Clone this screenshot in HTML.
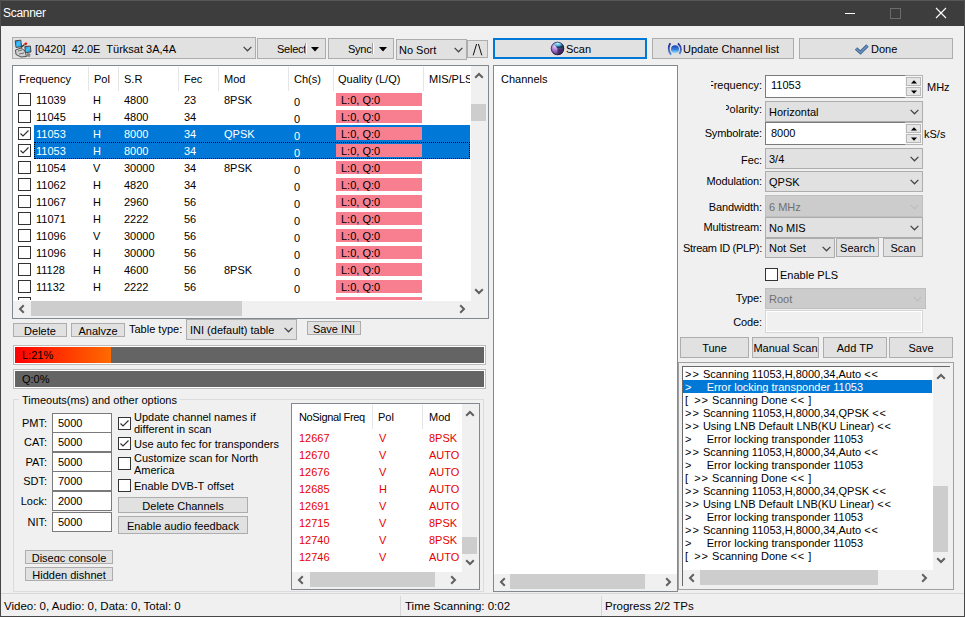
<!DOCTYPE html><html><head><meta charset="utf-8"><style>
html,body{margin:0;padding:0;}
body{width:965px;height:617px;position:relative;overflow:hidden;background:#f0f0f0;font-family:"Liberation Sans",sans-serif;font-size:11px;color:#000;}
body div, body svg{position:absolute;}
.t{white-space:pre;}
.btn{background:#e1e1e1;border:1px solid #adadad;text-align:center;white-space:pre;overflow:hidden;}
</style></head><body>
<div style="left:0px;top:0px;width:965px;height:26px;background:#3d3d3d"></div>
<div style="left:0px;top:0px;width:965px;height:1px;background:#575757"></div>
<div style="left:0px;top:0px;width:1px;height:26px;background:#4d4d4d"></div>
<div style="left:964px;top:0px;width:1px;height:26px;background:#4d4d4d"></div>
<div class="t" style="left:3px;top:6px;line-height:15px;color:#fff;font-size:12px;letter-spacing:-0.3px">Scanner</div>
<div style="left:845px;top:13px;width:10px;height:1px;background:#fff"></div>
<div style="left:890px;top:8px;width:9px;height:9px;border:1px solid #6b6b6b"></div>
<svg style="left:935px;top:7px" width="12" height="12" viewBox="0 0 12 12"><path d="M1 1 L11 11 M11 1 L1 11" stroke="#fff" stroke-width="1.1"/></svg>
<div style="left:0px;top:26px;width:1px;height:591px;background:#474747"></div>
<div style="left:964px;top:26px;width:1px;height:591px;background:#474747"></div>
<div style="left:0px;top:616px;width:965px;height:1px;background:#474747"></div>
<div style="left:12px;top:37px;width:242px;height:20px;background:#e1e1e1;border:1px solid #adadad"></div>
<div class="t" style="left:35px;top:38px;line-height:22px;color:#000">[0420]  42.0E  Türksat 3A,4A</div>
<svg style="left:243px;top:46px" width="9" height="6" viewBox="0 0 9 6"><path d="M0.6 0.9 L4.5 4.8 L8.4 0.9" fill="none" stroke="#444" stroke-width="1.25"/></svg>
<svg style="left:14px;top:39px" width="18" height="19" viewBox="0 0 18 19">
<defs><linearGradient id="sp" x1="0" y1="0" x2="1" y2="1"><stop offset="0" stop-color="#1a7fd8"/><stop offset="0.5" stop-color="#3cc6ff"/><stop offset="1" stop-color="#1c8de0"/></linearGradient></defs>
<path d="M1.5 11 L7 9 L11 12 L12.5 17.5 L7 18 L2 15.5 Z" fill="#d0d0d0" stroke="#505050" stroke-width="1"/>
<path d="M4 12 L8 11 M5 15 L10 14" stroke="#707070" stroke-width="1"/>
<path d="M13 13 L16.5 15 L16 18 L13 17.5 Z" fill="#8a8a8a"/>
<path d="M7 8.5 L10.5 5.5" stroke="#333" stroke-width="1.4"/>
<path d="M1.2 1.8 L6.8 1.2 L7.6 7.8 L2 8.4 Z" fill="url(#sp)" stroke="#4a3a30" stroke-width="0.9"/>
<path d="M10.8 7.6 L16.4 7 L17 13 L11.4 13.6 Z" fill="url(#sp)" stroke="#4a3a30" stroke-width="0.9"/>
<path d="M10 4.8 Q11.5 2.8 13.5 4 L12 6.8 Z" fill="#e01818"/>
</svg>
<div class="btn" style="left:257px;top:38px;width:67px;height:19px;line-height:19px;"><span style="position:relative;top:1px"></span></div>
<div class="t" style="left:277px;top:43px;line-height:13px;letter-spacing:-0.25px">Select</div>
<div style="left:305px;top:43px;width:1px;height:11px;background:#9a9a9a"></div>
<div style="left:306px;top:43px;width:1px;height:11px;background:#fff"></div>
<svg style="left:311px;top:47px" width="8" height="5" viewBox="0 0 8 5"><path d="M0 0 L8 0 L4 4.6 Z" fill="#000"/></svg>
<div class="btn" style="left:328px;top:38px;width:64px;height:19px;line-height:19px;"><span style="position:relative;top:1px"></span></div>
<div class="t" style="left:348px;top:43px;line-height:13px;letter-spacing:-0.25px">Sync</div>
<div style="left:372px;top:43px;width:1px;height:11px;background:#9a9a9a"></div>
<div style="left:373px;top:43px;width:1px;height:11px;background:#fff"></div>
<svg style="left:379px;top:47px" width="8" height="5" viewBox="0 0 8 5"><path d="M0 0 L8 0 L4 4.6 Z" fill="#000"/></svg>
<div style="left:396px;top:39px;width:69px;height:19px;background:#e1e1e1;border:1px solid #adadad"></div>
<div class="t" style="left:399px;top:40px;line-height:21px;color:#000">No Sort</div>
<svg style="left:454px;top:47px" width="9" height="6" viewBox="0 0 9 6"><path d="M0.6 0.9 L4.5 4.8 L8.4 0.9" fill="none" stroke="#444" stroke-width="1.25"/></svg>
<div class="btn" style="left:467px;top:40px;width:19px;height:16px;line-height:16px;"><span style="position:relative;top:1px"></span></div>
<svg style="left:472px;top:43px" width="11" height="13" viewBox="0 0 11 13"><path d="M1.2 12.3 L4.6 1 M6.4 1 L9.8 12.3" fill="none" stroke="#111" stroke-width="1"/></svg>
<div style="left:493px;top:38px;width:150px;height:17px;background:#e1e1e1;border:2px solid #0078d7"></div>
<svg style="left:550px;top:41px" width="15" height="15" viewBox="0 0 15 15">
<defs><radialGradient id="sph" cx="0.35" cy="0.3" r="0.8"><stop offset="0" stop-color="#f0d8ff"/><stop offset="0.5" stop-color="#9a66c0"/><stop offset="1" stop-color="#2a2050"/></radialGradient>
<radialGradient id="sph2" cx="0.4" cy="0.2" r="0.6"><stop offset="0" stop-color="#c8f4ff"/><stop offset="0.6" stop-color="#58b0e0"/><stop offset="1" stop-color="#1a3a60"/></radialGradient></defs>
<circle cx="7.5" cy="7.5" r="6.6" fill="url(#sph)"/>
<path d="M7.5 7.5 L3.2 2.5 A6.6 6.6 0 0 1 14.1 7.5 Z" fill="url(#sph2)"/>
<path d="M7.5 7.5 L14.1 7.5 A6.6 6.6 0 0 1 7.5 14.1 Z" fill="#3a2258" opacity="0.8"/>
<circle cx="7.5" cy="7.5" r="6.3" fill="none" stroke="#1c1838" stroke-width="0.9" opacity="0.75"/>
</svg>
<div class="t" style="left:566px;top:43px;line-height:13px;">Scan</div>
<div class="btn" style="left:652px;top:38px;width:140px;height:19px;line-height:19px;"><span style="position:relative;top:1px"></span></div>
<svg style="left:666px;top:42px" width="18" height="15" viewBox="0 0 18 15">
<defs><linearGradient id="ucl" x1="0" y1="0" x2="0" y2="1"><stop offset="0" stop-color="#1a3fb0"/><stop offset="0.55" stop-color="#3a82e0"/><stop offset="1" stop-color="#9ee4ff"/></linearGradient>
<linearGradient id="ucb" x1="0" y1="0" x2="0" y2="1"><stop offset="0" stop-color="#1a2a90"/><stop offset="1" stop-color="#5a8ad8"/></linearGradient></defs>
<circle cx="9" cy="7.2" r="4" fill="url(#ucl)"/>
<path d="M4.3 1.3 Q0.8 7 5 12.8" fill="none" stroke="url(#ucb)" stroke-width="1.8"/>
<path d="M12 1.3 Q17 6 13.5 12" fill="none" stroke="url(#ucb)" stroke-width="1.8"/>
</svg>
<div class="t" style="left:683px;top:43px;line-height:13px;">Update Channel list</div>
<div class="btn" style="left:799px;top:38px;width:152px;height:19px;line-height:19px;"><span style="position:relative;top:1px"></span></div>
<svg style="left:854px;top:43px" width="15" height="12" viewBox="0 0 15 12"><path d="M2 5.5 L6.5 9.5 L13.5 2.5" fill="none" stroke="#3f6390" stroke-width="3.4" stroke-linejoin="miter"/><path d="M2 5.5 L6.5 9.5 L13.5 2.5" fill="none" stroke="#6a92c0" stroke-width="1.6"/></svg>
<div class="t" style="left:871px;top:43px;line-height:13px;">Done</div>
<div style="left:12px;top:65px;width:477px;height:254px;background:#fff;border:1px solid #828790;box-sizing:border-box"></div>
<div class="t" style="left:19px;top:73px;line-height:13px;">Frequency</div>
<div class="t" style="left:94px;top:73px;line-height:13px;">Pol</div>
<div class="t" style="left:124px;top:73px;line-height:13px;">S.R</div>
<div class="t" style="left:184px;top:73px;line-height:13px;">Fec</div>
<div class="t" style="left:224px;top:73px;line-height:13px;">Mod</div>
<div class="t" style="left:294px;top:73px;line-height:13px;">Ch(s)</div>
<div class="t" style="left:338px;top:73px;line-height:13px;">Quality (L/Q)</div>
<div style="left:88px;top:67px;width:1px;height:24px;background:#e5e5e5"></div>
<div style="left:118px;top:67px;width:1px;height:24px;background:#e5e5e5"></div>
<div style="left:178px;top:67px;width:1px;height:24px;background:#e5e5e5"></div>
<div style="left:218px;top:67px;width:1px;height:24px;background:#e5e5e5"></div>
<div style="left:288px;top:67px;width:1px;height:24px;background:#e5e5e5"></div>
<div style="left:333px;top:67px;width:1px;height:24px;background:#e5e5e5"></div>
<div style="left:423px;top:67px;width:1px;height:24px;background:#e5e5e5"></div>
<div style="left:13px;top:66px;width:458px;height:234px;overflow:hidden">
<div style="left:5px;top:27px;width:11px;height:11px;background:#fff;border:1px solid #333"></div>
<div class="t" style="left:23px;top:28px;line-height:13px;color:#000">11039</div>
<div class="t" style="left:80px;top:28px;line-height:13px;color:#000">H</div>
<div class="t" style="left:111px;top:28px;line-height:13px;color:#000">4800</div>
<div class="t" style="left:171px;top:28px;line-height:13px;color:#000">23</div>
<div class="t" style="left:211px;top:28px;line-height:13px;color:#000">8PSK</div>
<div class="t" style="left:281px;top:30px;line-height:13px;color:#000">0</div>
<div style="left:323px;top:27px;width:86px;height:13px;background:#f77f90"></div>
<div class="t" style="left:328px;top:28px;line-height:13px;color:#000">L:0, Q:0</div>
<div style="left:5px;top:44px;width:11px;height:11px;background:#fff;border:1px solid #333"></div>
<div class="t" style="left:23px;top:45px;line-height:13px;color:#000">11045</div>
<div class="t" style="left:80px;top:45px;line-height:13px;color:#000">H</div>
<div class="t" style="left:111px;top:45px;line-height:13px;color:#000">4800</div>
<div class="t" style="left:171px;top:45px;line-height:13px;color:#000">34</div>
<div class="t" style="left:281px;top:47px;line-height:13px;color:#000">0</div>
<div style="left:323px;top:44px;width:86px;height:13px;background:#f77f90"></div>
<div class="t" style="left:328px;top:45px;line-height:13px;color:#000">L:0, Q:0</div>
<div style="left:21px;top:59px;width:436px;height:17px;background:#0078d7"></div>
<div style="left:5px;top:61px;width:11px;height:11px;background:#fff;border:1px solid #333"></div>
<svg style="left:6px;top:62px" width="11" height="11" viewBox="0 0 11 11"><path d="M1.5 5.5 L4 8 L9.5 2.5" fill="none" stroke="#333" stroke-width="1.2"/></svg>
<div class="t" style="left:23px;top:62px;line-height:13px;color:#fff">11053</div>
<div class="t" style="left:80px;top:62px;line-height:13px;color:#fff">H</div>
<div class="t" style="left:111px;top:62px;line-height:13px;color:#fff">8000</div>
<div class="t" style="left:171px;top:62px;line-height:13px;color:#fff">34</div>
<div class="t" style="left:211px;top:62px;line-height:13px;color:#fff">QPSK</div>
<div class="t" style="left:281px;top:64px;line-height:13px;color:#fff">0</div>
<div style="left:323px;top:61px;width:86px;height:13px;background:#f77f90"></div>
<div class="t" style="left:328px;top:62px;line-height:13px;color:#000">L:0, Q:0</div>
<div style="left:21px;top:76px;width:436px;height:17px;background:#0078d7"></div>
<div style="left:21px;top:76px;width:434px;height:15px;border:1px dotted #000"></div>
<div style="left:5px;top:78px;width:11px;height:11px;background:#fff;border:1px solid #333"></div>
<svg style="left:6px;top:79px" width="11" height="11" viewBox="0 0 11 11"><path d="M1.5 5.5 L4 8 L9.5 2.5" fill="none" stroke="#333" stroke-width="1.2"/></svg>
<div class="t" style="left:23px;top:79px;line-height:13px;color:#fff">11053</div>
<div class="t" style="left:80px;top:79px;line-height:13px;color:#fff">H</div>
<div class="t" style="left:111px;top:79px;line-height:13px;color:#fff">8000</div>
<div class="t" style="left:171px;top:79px;line-height:13px;color:#fff">34</div>
<div class="t" style="left:281px;top:81px;line-height:13px;color:#fff">0</div>
<div style="left:323px;top:78px;width:86px;height:13px;background:#f77f90"></div>
<div class="t" style="left:328px;top:79px;line-height:13px;color:#000">L:0, Q:0</div>
<div style="left:5px;top:95px;width:11px;height:11px;background:#fff;border:1px solid #333"></div>
<div class="t" style="left:23px;top:96px;line-height:13px;color:#000">11054</div>
<div class="t" style="left:80px;top:96px;line-height:13px;color:#000">V</div>
<div class="t" style="left:111px;top:96px;line-height:13px;color:#000">30000</div>
<div class="t" style="left:171px;top:96px;line-height:13px;color:#000">34</div>
<div class="t" style="left:211px;top:96px;line-height:13px;color:#000">8PSK</div>
<div class="t" style="left:281px;top:98px;line-height:13px;color:#000">0</div>
<div style="left:323px;top:95px;width:86px;height:13px;background:#f77f90"></div>
<div class="t" style="left:328px;top:96px;line-height:13px;color:#000">L:0, Q:0</div>
<div style="left:5px;top:112px;width:11px;height:11px;background:#fff;border:1px solid #333"></div>
<div class="t" style="left:23px;top:113px;line-height:13px;color:#000">11062</div>
<div class="t" style="left:80px;top:113px;line-height:13px;color:#000">H</div>
<div class="t" style="left:111px;top:113px;line-height:13px;color:#000">4820</div>
<div class="t" style="left:171px;top:113px;line-height:13px;color:#000">34</div>
<div class="t" style="left:281px;top:115px;line-height:13px;color:#000">0</div>
<div style="left:323px;top:112px;width:86px;height:13px;background:#f77f90"></div>
<div class="t" style="left:328px;top:113px;line-height:13px;color:#000">L:0, Q:0</div>
<div style="left:5px;top:129px;width:11px;height:11px;background:#fff;border:1px solid #333"></div>
<div class="t" style="left:23px;top:130px;line-height:13px;color:#000">11067</div>
<div class="t" style="left:80px;top:130px;line-height:13px;color:#000">H</div>
<div class="t" style="left:111px;top:130px;line-height:13px;color:#000">2960</div>
<div class="t" style="left:171px;top:130px;line-height:13px;color:#000">56</div>
<div class="t" style="left:281px;top:132px;line-height:13px;color:#000">0</div>
<div style="left:323px;top:129px;width:86px;height:13px;background:#f77f90"></div>
<div class="t" style="left:328px;top:130px;line-height:13px;color:#000">L:0, Q:0</div>
<div style="left:5px;top:146px;width:11px;height:11px;background:#fff;border:1px solid #333"></div>
<div class="t" style="left:23px;top:147px;line-height:13px;color:#000">11071</div>
<div class="t" style="left:80px;top:147px;line-height:13px;color:#000">H</div>
<div class="t" style="left:111px;top:147px;line-height:13px;color:#000">2222</div>
<div class="t" style="left:171px;top:147px;line-height:13px;color:#000">56</div>
<div class="t" style="left:281px;top:149px;line-height:13px;color:#000">0</div>
<div style="left:323px;top:146px;width:86px;height:13px;background:#f77f90"></div>
<div class="t" style="left:328px;top:147px;line-height:13px;color:#000">L:0, Q:0</div>
<div style="left:5px;top:163px;width:11px;height:11px;background:#fff;border:1px solid #333"></div>
<div class="t" style="left:23px;top:164px;line-height:13px;color:#000">11096</div>
<div class="t" style="left:80px;top:164px;line-height:13px;color:#000">V</div>
<div class="t" style="left:111px;top:164px;line-height:13px;color:#000">30000</div>
<div class="t" style="left:171px;top:164px;line-height:13px;color:#000">56</div>
<div class="t" style="left:281px;top:166px;line-height:13px;color:#000">0</div>
<div style="left:323px;top:163px;width:86px;height:13px;background:#f77f90"></div>
<div class="t" style="left:328px;top:164px;line-height:13px;color:#000">L:0, Q:0</div>
<div style="left:5px;top:180px;width:11px;height:11px;background:#fff;border:1px solid #333"></div>
<div class="t" style="left:23px;top:181px;line-height:13px;color:#000">11096</div>
<div class="t" style="left:80px;top:181px;line-height:13px;color:#000">H</div>
<div class="t" style="left:111px;top:181px;line-height:13px;color:#000">30000</div>
<div class="t" style="left:171px;top:181px;line-height:13px;color:#000">56</div>
<div class="t" style="left:281px;top:183px;line-height:13px;color:#000">0</div>
<div style="left:323px;top:180px;width:86px;height:13px;background:#f77f90"></div>
<div class="t" style="left:328px;top:181px;line-height:13px;color:#000">L:0, Q:0</div>
<div style="left:5px;top:197px;width:11px;height:11px;background:#fff;border:1px solid #333"></div>
<div class="t" style="left:23px;top:198px;line-height:13px;color:#000">11128</div>
<div class="t" style="left:80px;top:198px;line-height:13px;color:#000">H</div>
<div class="t" style="left:111px;top:198px;line-height:13px;color:#000">4600</div>
<div class="t" style="left:171px;top:198px;line-height:13px;color:#000">56</div>
<div class="t" style="left:211px;top:198px;line-height:13px;color:#000">8PSK</div>
<div class="t" style="left:281px;top:200px;line-height:13px;color:#000">0</div>
<div style="left:323px;top:197px;width:86px;height:13px;background:#f77f90"></div>
<div class="t" style="left:328px;top:198px;line-height:13px;color:#000">L:0, Q:0</div>
<div style="left:5px;top:214px;width:11px;height:11px;background:#fff;border:1px solid #333"></div>
<div class="t" style="left:23px;top:215px;line-height:13px;color:#000">11132</div>
<div class="t" style="left:80px;top:215px;line-height:13px;color:#000">H</div>
<div class="t" style="left:111px;top:215px;line-height:13px;color:#000">2222</div>
<div class="t" style="left:171px;top:215px;line-height:13px;color:#000">56</div>
<div class="t" style="left:281px;top:217px;line-height:13px;color:#000">0</div>
<div style="left:323px;top:214px;width:86px;height:13px;background:#f77f90"></div>
<div class="t" style="left:328px;top:215px;line-height:13px;color:#000">L:0, Q:0</div>
<div style="left:5px;top:231px;width:11px;height:11px;background:#fff;border:1px solid #333"></div>
<div style="left:323px;top:231px;width:86px;height:13px;background:#f77f90"></div>
</div>
<div style="left:471px;top:66px;width:17px;height:24px;background:#fff"></div>
<div style="left:471px;top:66px;width:17px;height:235px;background:#f0f0f0"></div>
<div style="left:471px;top:104px;width:15px;height:17px;background:#cdcdcd"></div>
<svg style="left:474px;top:72px" width="10" height="7" viewBox="0 0 10 7"><path d="M1.2 5.8 L5 2 L8.8 5.8" fill="none" stroke="#606060" stroke-width="2"/></svg>
<svg style="left:474px;top:288px" width="10" height="7" viewBox="0 0 10 7"><path d="M1.2 1.2 L5 5 L8.8 1.2" fill="none" stroke="#606060" stroke-width="2"/></svg>
<div style="left:13px;top:301px;width:458px;height:17px;background:#f0f0f0"></div>
<div style="left:31px;top:301px;width:211px;height:15px;background:#cdcdcd"></div>
<svg style="left:18px;top:304px" width="7" height="10" viewBox="0 0 7 10"><path d="M5.8 1.2 L2 5 L5.8 8.8" fill="none" stroke="#606060" stroke-width="2"/></svg>
<svg style="left:459px;top:304px" width="7" height="10" viewBox="0 0 7 10"><path d="M1.2 1.2 L5 5 L1.2 8.8" fill="none" stroke="#606060" stroke-width="2"/></svg>
<div style="left:471px;top:301px;width:17px;height:17px;background:#f0f0f0"></div>
<div style="left:429px;top:73px;width:41px;height:13px;overflow:hidden"><div class="t" style="left:0;top:0;line-height:13px">MIS/PLS,</div></div>
<div class="btn" style="left:13px;top:323px;width:52px;height:12px;line-height:12px;"><span style="position:relative;top:1px">Delete</span></div>
<div class="btn" style="left:71px;top:323px;width:52px;height:12px;"><div style="left:0;top:0;width:52px;height:11px;overflow:hidden"><div class="t" style="left:0;top:1px;width:52px;text-align:center;line-height:12px">Analyze</div></div></div>
<div class="t" style="left:129px;top:323px;line-height:13px;">Table type:</div>
<div style="left:186px;top:319px;width:109px;height:19px;background:#e1e1e1;border:1px solid #adadad"></div>
<div class="t" style="left:190px;top:320px;line-height:21px;color:#000">INI (default) table</div>
<svg style="left:284px;top:327px" width="9" height="6" viewBox="0 0 9 6"><path d="M0.6 0.9 L4.5 4.8 L8.4 0.9" fill="none" stroke="#444" stroke-width="1.25"/></svg>
<div class="btn" style="left:307px;top:321px;width:52px;height:12px;line-height:12px;"><span style="position:relative;top:1px">Save INI</span></div>
<div style="left:13px;top:345px;width:473px;height:20px;background:#fff;border:1px solid #bcbcbc;box-sizing:border-box"></div>
<div style="left:15px;top:347px;width:469px;height:16px;background:#646464"></div>
<div style="left:15px;top:347px;width:96px;height:16px;background:linear-gradient(to right,#ff0000,#ff6a00)"></div>
<div class="t" style="left:22px;top:349px;line-height:13px;color:#000">L:21%</div>
<div style="left:13px;top:369px;width:473px;height:20px;background:#fff;border:1px solid #bcbcbc;box-sizing:border-box"></div>
<div style="left:15px;top:371px;width:469px;height:16px;background:#646464"></div>
<div class="t" style="left:22px;top:373px;line-height:13px;color:#000">Q:0%</div>
<div style="left:13px;top:399px;width:471px;height:193px;border:1px solid #dcdcdc;box-sizing:border-box"></div>
<div style="left:19px;top:392px;width:161px;height:14px;background:#f0f0f0"></div>
<div class="t" style="left:22px;top:393px;line-height:14px;">Timeouts(ms) and other options</div>
<div class="t" style="left:0;top:413px;width:47px;text-align:right;line-height:20px">PMT:</div>
<div style="left:52px;top:413px;width:58px;height:18px;background:#fff;border:1px solid #7a7a7a;"></div>
<div class="t" style="left:58px;top:413px;line-height:20px;">5000</div>
<div class="t" style="left:0;top:432px;width:47px;text-align:right;line-height:20px">CAT:</div>
<div style="left:52px;top:432px;width:58px;height:18px;background:#fff;border:1px solid #7a7a7a;"></div>
<div class="t" style="left:58px;top:432px;line-height:20px;">5000</div>
<div class="t" style="left:0;top:452px;width:47px;text-align:right;line-height:20px">PAT:</div>
<div style="left:52px;top:452px;width:58px;height:18px;background:#fff;border:1px solid #7a7a7a;"></div>
<div class="t" style="left:58px;top:452px;line-height:20px;">5000</div>
<div class="t" style="left:0;top:471px;width:47px;text-align:right;line-height:20px">SDT:</div>
<div style="left:52px;top:471px;width:58px;height:18px;background:#fff;border:1px solid #7a7a7a;"></div>
<div class="t" style="left:58px;top:471px;line-height:20px;">7000</div>
<div class="t" style="left:0;top:491px;width:47px;text-align:right;line-height:20px">Lock:</div>
<div style="left:52px;top:491px;width:58px;height:18px;background:#fff;border:1px solid #7a7a7a;"></div>
<div class="t" style="left:58px;top:491px;line-height:20px;">2000</div>
<div class="t" style="left:0;top:512px;width:47px;text-align:right;line-height:20px">NIT:</div>
<div style="left:52px;top:512px;width:58px;height:18px;background:#fff;border:1px solid #7a7a7a;"></div>
<div class="t" style="left:58px;top:512px;line-height:20px;">5000</div>
<div style="left:118px;top:417px;width:11px;height:11px;background:#fff;border:1px solid #333"></div>
<svg style="left:119px;top:418px" width="11" height="11" viewBox="0 0 11 11"><path d="M1.5 5.5 L4 8 L9.5 2.5" fill="none" stroke="#333" stroke-width="1.2"/></svg>
<div class="t" style="left:134px;top:411px;line-height:12px;">Update channel names if
different in scan</div>
<div style="left:118px;top:437px;width:11px;height:11px;background:#fff;border:1px solid #333"></div>
<svg style="left:119px;top:438px" width="11" height="11" viewBox="0 0 11 11"><path d="M1.5 5.5 L4 8 L9.5 2.5" fill="none" stroke="#333" stroke-width="1.2"/></svg>
<div class="t" style="left:134px;top:438px;line-height:12px;">Use auto fec for transponders</div>
<div style="left:118px;top:457px;width:11px;height:11px;background:#fff;border:1px solid #333"></div>
<div class="t" style="left:134px;top:452px;line-height:12px;">Customize scan for North
America</div>
<div style="left:118px;top:479px;width:11px;height:11px;background:#fff;border:1px solid #333"></div>
<div class="t" style="left:134px;top:480px;line-height:12px;">Enable DVB-T offset</div>
<div class="btn" style="left:118px;top:497px;width:128px;height:14px;line-height:14px;"><span style="position:relative;top:1px">Delete Channels</span></div>
<div class="btn" style="left:118px;top:516px;width:128px;height:16px;line-height:16px;"><span style="position:relative;top:1px">Enable audio feedback</span></div>
<div class="btn" style="left:25px;top:550px;width:86px;height:12px;"><div style="left:0;top:0;width:86px;height:11px;overflow:hidden"><div class="t" style="left:0;top:1px;width:86px;text-align:center;line-height:12px">Diseqc console</div></div></div>
<div class="btn" style="left:25px;top:567px;width:86px;height:12px;line-height:12px;"><span style="position:relative;top:1px">Hidden dishnet</span></div>
<div style="left:291px;top:403px;width:189px;height:187px;background:#fff;border:1px solid #828790;box-sizing:border-box"></div>
<div class="t" style="left:299px;top:411px;line-height:13px;letter-spacing:-0.35px">NoSignal Freq</div>
<div class="t" style="left:378px;top:411px;line-height:13px;">Pol</div>
<div class="t" style="left:429px;top:411px;line-height:13px;">Mod</div>
<div style="left:372px;top:405px;width:1px;height:24px;background:#e5e5e5"></div>
<div style="left:422px;top:405px;width:1px;height:24px;background:#e5e5e5"></div>
<div class="t" style="left:299px;top:432px;line-height:13px;color:#e60000">12667</div>
<div class="t" style="left:379px;top:432px;line-height:13px;color:#e60000">V</div>
<div class="t" style="left:429px;top:432px;line-height:13px;color:#e60000">8PSK</div>
<div class="t" style="left:299px;top:449px;line-height:13px;color:#e60000">12670</div>
<div class="t" style="left:379px;top:449px;line-height:13px;color:#e60000">V</div>
<div class="t" style="left:429px;top:449px;line-height:13px;color:#e60000">AUTO</div>
<div class="t" style="left:299px;top:466px;line-height:13px;color:#e60000">12676</div>
<div class="t" style="left:379px;top:466px;line-height:13px;color:#e60000">V</div>
<div class="t" style="left:429px;top:466px;line-height:13px;color:#e60000">AUTO</div>
<div class="t" style="left:299px;top:483px;line-height:13px;color:#e60000">12685</div>
<div class="t" style="left:379px;top:483px;line-height:13px;color:#e60000">H</div>
<div class="t" style="left:429px;top:483px;line-height:13px;color:#e60000">AUTO</div>
<div class="t" style="left:299px;top:500px;line-height:13px;color:#e60000">12691</div>
<div class="t" style="left:379px;top:500px;line-height:13px;color:#e60000">V</div>
<div class="t" style="left:429px;top:500px;line-height:13px;color:#e60000">AUTO</div>
<div class="t" style="left:299px;top:517px;line-height:13px;color:#e60000">12715</div>
<div class="t" style="left:379px;top:517px;line-height:13px;color:#e60000">V</div>
<div class="t" style="left:429px;top:517px;line-height:13px;color:#e60000">8PSK</div>
<div class="t" style="left:299px;top:534px;line-height:13px;color:#e60000">12740</div>
<div class="t" style="left:379px;top:534px;line-height:13px;color:#e60000">V</div>
<div class="t" style="left:429px;top:534px;line-height:13px;color:#e60000">8PSK</div>
<div class="t" style="left:299px;top:551px;line-height:13px;color:#e60000">12746</div>
<div class="t" style="left:379px;top:551px;line-height:13px;color:#e60000">V</div>
<div class="t" style="left:429px;top:551px;line-height:13px;color:#e60000">AUTO</div>
<div style="left:462px;top:404px;width:17px;height:168px;background:#f0f0f0"></div>
<div style="left:462px;top:537px;width:15px;height:17px;background:#cdcdcd"></div>
<svg style="left:465px;top:410px" width="10" height="7" viewBox="0 0 10 7"><path d="M1.2 5.8 L5 2 L8.8 5.8" fill="none" stroke="#606060" stroke-width="2"/></svg>
<svg style="left:465px;top:559px" width="10" height="7" viewBox="0 0 10 7"><path d="M1.2 1.2 L5 5 L8.8 1.2" fill="none" stroke="#606060" stroke-width="2"/></svg>
<div style="left:292px;top:572px;width:170px;height:17px;background:#f0f0f0"></div>
<div style="left:310px;top:572px;width:125px;height:15px;background:#cdcdcd"></div>
<svg style="left:297px;top:575px" width="7" height="10" viewBox="0 0 7 10"><path d="M5.8 1.2 L2 5 L5.8 8.8" fill="none" stroke="#606060" stroke-width="2"/></svg>
<svg style="left:450px;top:575px" width="7" height="10" viewBox="0 0 7 10"><path d="M1.2 1.2 L5 5 L1.2 8.8" fill="none" stroke="#606060" stroke-width="2"/></svg>
<div style="left:462px;top:572px;width:17px;height:17px;background:#f0f0f0"></div>
<div style="left:493px;top:65px;width:185px;height:527px;background:#fff;border:1px solid #828790;box-sizing:border-box"></div>
<div class="t" style="left:501px;top:73px;line-height:13px;">Channels</div>
<div style="left:494px;top:574px;width:183px;height:17px;background:#f0f0f0"></div>
<div style="left:510px;top:574px;width:135px;height:15px;background:#cdcdcd"></div>
<svg style="left:499px;top:577px" width="7" height="10" viewBox="0 0 7 10"><path d="M5.8 1.2 L2 5 L5.8 8.8" fill="none" stroke="#606060" stroke-width="2"/></svg>
<svg style="left:665px;top:577px" width="7" height="10" viewBox="0 0 7 10"><path d="M1.2 1.2 L5 5 L1.2 8.8" fill="none" stroke="#606060" stroke-width="2"/></svg>
<div style="left:711px;top:74px;width:51px;height:22px;overflow:hidden"><div class="t" style="right:0;top:0;line-height:22px;text-align:right">Frequency:</div></div>
<div style="left:765px;top:75px;width:156px;height:21px;background:#fff;border:1px solid #7a7a7a;"></div>
<div class="t" style="left:771px;top:74px;line-height:23px;">11053</div>
<div style="left:726px;top:99px;width:36px;height:21px;overflow:hidden"><div class="t" style="right:0;top:0;line-height:21px;text-align:right">Polarity:</div></div>
<div style="left:765px;top:101px;width:156px;height:19px;background:#e1e1e1;border:1px solid #adadad"></div>
<div class="t" style="left:769px;top:102px;line-height:21px;color:#000">Horizontal</div>
<svg style="left:910px;top:109px" width="9" height="6" viewBox="0 0 9 6"><path d="M0.6 0.9 L4.5 4.8 L8.4 0.9" fill="none" stroke="#444" stroke-width="1.25"/></svg>
<div class="t" style="left:640px;top:122px;width:122px;text-align:right;line-height:22px;letter-spacing:-0.12px">Symbolrate:</div>
<div style="left:765px;top:122px;width:156px;height:21px;background:#fff;border:1px solid #7a7a7a;"></div>
<div class="t" style="left:771px;top:122px;line-height:23px;">8000</div>
<div style="left:905px;top:75px;width:18px;height:23px;background:#f7f7f7;border:1px solid #b4b4b4;border-left:none;box-sizing:border-box"></div>
<div style="left:906px;top:77px;width:15px;height:9px;background:#e6e6e6;border:1px solid #b8b8b8;box-sizing:border-box"></div>
<div style="left:906px;top:87px;width:15px;height:9px;background:#e6e6e6;border:1px solid #b8b8b8;box-sizing:border-box"></div>
<svg style="left:911px;top:80px" width="6" height="4" viewBox="0 0 6 4"><path d="M0 3.6 L3 0.2 L6 3.6 Z" fill="#000"/></svg>
<svg style="left:911px;top:90px" width="6" height="4" viewBox="0 0 6 4"><path d="M0 0.4 L3 3.8 L6 0.4 Z" fill="#000"/></svg>
<div style="left:905px;top:122px;width:18px;height:23px;background:#f7f7f7;border:1px solid #b4b4b4;border-left:none;box-sizing:border-box"></div>
<div style="left:906px;top:124px;width:15px;height:9px;background:#e6e6e6;border:1px solid #b8b8b8;box-sizing:border-box"></div>
<div style="left:906px;top:134px;width:15px;height:9px;background:#e6e6e6;border:1px solid #b8b8b8;box-sizing:border-box"></div>
<svg style="left:911px;top:127px" width="6" height="4" viewBox="0 0 6 4"><path d="M0 3.6 L3 0.2 L6 3.6 Z" fill="#000"/></svg>
<svg style="left:911px;top:137px" width="6" height="4" viewBox="0 0 6 4"><path d="M0 0.4 L3 3.8 L6 0.4 Z" fill="#000"/></svg>
<div class="t" style="left:927px;top:81px;line-height:13px;">MHz</div>
<div class="t" style="left:924px;top:128px;line-height:13px;">kS/s</div>
<div class="t" style="left:640px;top:150px;width:122px;text-align:right;line-height:21px;letter-spacing:-0.12px">Fec:</div>
<div style="left:765px;top:148px;width:156px;height:19px;background:#e1e1e1;border:1px solid #adadad"></div>
<div class="t" style="left:769px;top:149px;line-height:21px;color:#000">3/4</div>
<svg style="left:910px;top:156px" width="9" height="6" viewBox="0 0 9 6"><path d="M0.6 0.9 L4.5 4.8 L8.4 0.9" fill="none" stroke="#444" stroke-width="1.25"/></svg>
<div class="t" style="left:640px;top:171px;width:122px;text-align:right;line-height:21px;letter-spacing:-0.12px">Modulation:</div>
<div style="left:765px;top:171px;width:156px;height:19px;background:#e1e1e1;border:1px solid #adadad"></div>
<div class="t" style="left:769px;top:172px;line-height:21px;color:#000">QPSK</div>
<svg style="left:910px;top:179px" width="9" height="6" viewBox="0 0 9 6"><path d="M0.6 0.9 L4.5 4.8 L8.4 0.9" fill="none" stroke="#444" stroke-width="1.25"/></svg>
<div class="t" style="left:640px;top:196px;width:122px;text-align:right;line-height:22px;letter-spacing:-0.12px">Bandwidth:</div>
<div style="left:765px;top:195px;width:156px;height:20px;background:#cccccc;border:1px solid #bfbfbf"></div>
<div class="t" style="left:769px;top:196px;line-height:22px;color:#707070">6 MHz</div>
<svg style="left:910px;top:204px" width="9" height="6" viewBox="0 0 9 6"><path d="M0.6 0.9 L4.5 4.8 L8.4 0.9" fill="none" stroke="#bfbfbf" stroke-width="1.25"/></svg>
<div class="t" style="left:640px;top:217px;width:122px;text-align:right;line-height:21px;letter-spacing:-0.12px">Multistream:</div>
<div style="left:765px;top:217px;width:156px;height:19px;background:#e1e1e1;border:1px solid #adadad"></div>
<div class="t" style="left:769px;top:218px;line-height:21px;color:#000">No MIS</div>
<svg style="left:910px;top:225px" width="9" height="6" viewBox="0 0 9 6"><path d="M0.6 0.9 L4.5 4.8 L8.4 0.9" fill="none" stroke="#444" stroke-width="1.25"/></svg>
<div class="t" style="left:640px;top:238px;width:122px;text-align:right;line-height:20px;letter-spacing:-0.3px">Stream ID (PLP):</div>
<div style="left:765px;top:238px;width:68px;height:18px;background:#e1e1e1;border:1px solid #adadad"></div>
<div class="t" style="left:769px;top:238px;line-height:20px;color:#000">Not Set</div>
<svg style="left:822px;top:246px" width="9" height="6" viewBox="0 0 9 6"><path d="M0.6 0.9 L4.5 4.8 L8.4 0.9" fill="none" stroke="#444" stroke-width="1.25"/></svg>
<div class="btn" style="left:836px;top:238px;width:41px;height:17px;line-height:17px;"><span style="position:relative;top:1px">Search</span></div>
<div class="btn" style="left:883px;top:238px;width:38px;height:17px;line-height:17px;"><span style="position:relative;top:1px">Scan</span></div>
<div style="left:765px;top:268px;width:11px;height:11px;background:#fff;border:1px solid #333"></div>
<div class="t" style="left:780px;top:268px;line-height:14px;">Enable PLS</div>
<div class="t" style="left:640px;top:288px;width:122px;text-align:right;line-height:21px;letter-spacing:-0.12px">Type:</div>
<div style="left:765px;top:288px;width:159px;height:19px;background:#cccccc;border:1px solid #bfbfbf"></div>
<div class="t" style="left:769px;top:289px;line-height:21px;color:#707070">Root</div>
<svg style="left:913px;top:296px" width="9" height="6" viewBox="0 0 9 6"><path d="M0.6 0.9 L4.5 4.8 L8.4 0.9" fill="none" stroke="#bfbfbf" stroke-width="1.25"/></svg>
<div class="t" style="left:640px;top:311px;width:122px;text-align:right;line-height:23px;letter-spacing:-0.12px">Code:</div>
<div style="left:765px;top:310px;width:158px;height:23px;background:#f0f0f0;border:1px solid #d5d5d5;box-sizing:border-box"></div>
<div style="left:766px;top:311px;width:156px;height:21px;border:1px solid #fff;box-sizing:border-box"></div>
<div class="btn" style="left:680px;top:337px;width:67px;height:19px;line-height:19px;"><span style="position:relative;top:1px">Tune</span></div>
<div class="btn" style="left:752px;top:337px;width:65px;height:19px;line-height:19px;"><span style="position:relative;top:1px">Manual Scan</span></div>
<div class="btn" style="left:823px;top:337px;width:62px;height:19px;line-height:19px;"><span style="position:relative;top:1px">Add TP</span></div>
<div class="btn" style="left:889px;top:337px;width:62px;height:19px;line-height:19px;"><span style="position:relative;top:1px">Save</span></div>
<div style="left:678px;top:362px;width:276px;height:228px;border:1px solid #a0a0a0;box-sizing:border-box"></div>
<div style="left:682px;top:366px;width:268px;height:220px;background:#fff;border-left:1px solid #696969;border-top:1px solid #696969;box-sizing:border-box"></div>
<div style="left:683px;top:380px;width:249px;height:13px;background:#0078d7"></div>
<div class="t" style="left:685px;top:368px;line-height:13px;color:#000"><span style="letter-spacing:1px">&gt;&gt;</span> Scanning 11053,H,8000,34,Auto <span style="letter-spacing:1px">&lt;&lt;</span></div>
<div class="t" style="left:685px;top:381px;line-height:13px;color:#fff">&gt;     Error locking transponder 11053</div>
<div class="t" style="left:685px;top:394px;line-height:13px;color:#000">[  <span style="letter-spacing:1px">&gt;&gt;</span> Scanning Done <span style="letter-spacing:1px">&lt;&lt;</span> ]</div>
<div class="t" style="left:685px;top:407px;line-height:13px;color:#000"><span style="letter-spacing:1px">&gt;&gt;</span> Scanning 11053,H,8000,34,QPSK <span style="letter-spacing:1px">&lt;&lt;</span></div>
<div class="t" style="left:685px;top:420px;line-height:13px;color:#000"><span style="letter-spacing:1px">&gt;&gt;</span> Using LNB Default LNB(KU Linear) <span style="letter-spacing:1px">&lt;&lt;</span></div>
<div class="t" style="left:685px;top:433px;line-height:13px;color:#000">&gt;     Error locking transponder 11053</div>
<div class="t" style="left:685px;top:446px;line-height:13px;color:#000"><span style="letter-spacing:1px">&gt;&gt;</span> Scanning 11053,H,8000,34,Auto <span style="letter-spacing:1px">&lt;&lt;</span></div>
<div class="t" style="left:685px;top:459px;line-height:13px;color:#000">&gt;     Error locking transponder 11053</div>
<div class="t" style="left:685px;top:472px;line-height:13px;color:#000">[  <span style="letter-spacing:1px">&gt;&gt;</span> Scanning Done <span style="letter-spacing:1px">&lt;&lt;</span> ]</div>
<div class="t" style="left:685px;top:485px;line-height:13px;color:#000"><span style="letter-spacing:1px">&gt;&gt;</span> Scanning 11053,H,8000,34,QPSK <span style="letter-spacing:1px">&lt;&lt;</span></div>
<div class="t" style="left:685px;top:498px;line-height:13px;color:#000"><span style="letter-spacing:1px">&gt;&gt;</span> Using LNB Default LNB(KU Linear) <span style="letter-spacing:1px">&lt;&lt;</span></div>
<div class="t" style="left:685px;top:511px;line-height:13px;color:#000">&gt;     Error locking transponder 11053</div>
<div class="t" style="left:685px;top:524px;line-height:13px;color:#000"><span style="letter-spacing:1px">&gt;&gt;</span> Scanning 11053,H,8000,34,Auto <span style="letter-spacing:1px">&lt;&lt;</span></div>
<div class="t" style="left:685px;top:537px;line-height:13px;color:#000">&gt;     Error locking transponder 11053</div>
<div class="t" style="left:685px;top:550px;line-height:13px;color:#000">[  <span style="letter-spacing:1px">&gt;&gt;</span> Scanning Done <span style="letter-spacing:1px">&lt;&lt;</span> ]</div>
<div style="left:933px;top:367px;width:17px;height:203px;background:#f0f0f0"></div>
<div style="left:933px;top:486px;width:15px;height:66px;background:#cdcdcd"></div>
<svg style="left:936px;top:373px" width="10" height="7" viewBox="0 0 10 7"><path d="M1.2 5.8 L5 2 L8.8 5.8" fill="none" stroke="#606060" stroke-width="2"/></svg>
<svg style="left:936px;top:557px" width="10" height="7" viewBox="0 0 10 7"><path d="M1.2 1.2 L5 5 L8.8 1.2" fill="none" stroke="#606060" stroke-width="2"/></svg>
<div style="left:683px;top:570px;width:250px;height:17px;background:#f0f0f0"></div>
<div style="left:700px;top:570px;width:178px;height:15px;background:#cdcdcd"></div>
<svg style="left:688px;top:573px" width="7" height="10" viewBox="0 0 7 10"><path d="M5.8 1.2 L2 5 L5.8 8.8" fill="none" stroke="#606060" stroke-width="2"/></svg>
<svg style="left:921px;top:573px" width="7" height="10" viewBox="0 0 7 10"><path d="M1.2 1.2 L5 5 L1.2 8.8" fill="none" stroke="#606060" stroke-width="2"/></svg>
<div style="left:933px;top:570px;width:17px;height:16px;background:#f0f0f0"></div>
<div style="left:1px;top:593px;width:963px;height:1px;background:#d7d7d7"></div>
<div class="t" style="left:4px;top:599px;line-height:14px;font-size:11.5px">Video: 0, Audio: 0, Data: 0, Total: 0</div>
<div style="left:400px;top:596px;width:1px;height:20px;background:#d7d7d7"></div>
<div class="t" style="left:405px;top:599px;line-height:14px;font-size:11.5px">Time Scanning: 0:02</div>
<div style="left:601px;top:596px;width:1px;height:20px;background:#d7d7d7"></div>
<div class="t" style="left:605px;top:599px;line-height:14px;font-size:11.5px">Progress 2/2 TPs</div>
</body></html>
